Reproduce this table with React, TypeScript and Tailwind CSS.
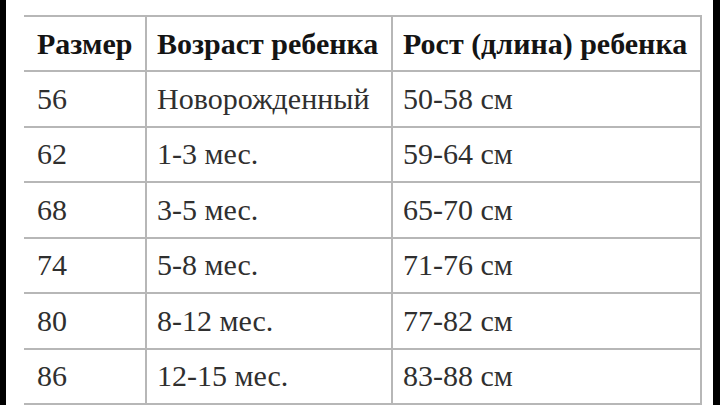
const rows = [
  ["56", "Новорожденный", "50-58 см"],
  ["62", "1-3 мес.", "59-64 см"],
  ["68", "3-5 мес.", "65-70 см"],
  ["74", "5-8 мес.", "71-76 см"],
  ["80", "8-12 мес.", "77-82 см"],
  ["86", "12-15 мес.", "83-88 см"],
];

const cell = "border-2 border-[#b7b7b7] pl-[10px] align-middle whitespace-nowrap";
const first = "border-l-0 pl-[13px]";

export default function App() {
  return (
    <div className="flex h-[405px] w-[720px] overflow-hidden bg-white">
      <div className="w-[6px] shrink-0 bg-black" />
      <div className="flex-1 pl-[18px] pt-[15px]">
        <table className="table-fixed border-collapse font-['Liberation_Serif',serif] text-[30px] leading-none">
          <colgroup>
            <col className="w-[122px]" />
            <col className="w-[246px]" />
            <col className="w-[309px]" />
          </colgroup>
          <thead>
            <tr className="h-[55px] font-bold text-[#141414]">
              <th className={cell + " " + first + " text-left"}>Размер</th>
              <th className={cell + " text-left"}>Возраст ребенка</th>
              <th className={cell + " text-left"}>Рост (длина) ребенка</th>
            </tr>
          </thead>
          <tbody>
            {rows.map((r) => (
              <tr key={r[0]} className="h-[55.5px] text-[#2f2f2f]">
                <td className={cell + " " + first}>{r[0]}</td>
                <td className={cell}>{r[1]}</td>
                <td className={cell}>{r[2]}</td>
              </tr>
            ))}
          </tbody>
        </table>
      </div>
      <div className="w-[7px] shrink-0 bg-black" />
    </div>
  );
}
